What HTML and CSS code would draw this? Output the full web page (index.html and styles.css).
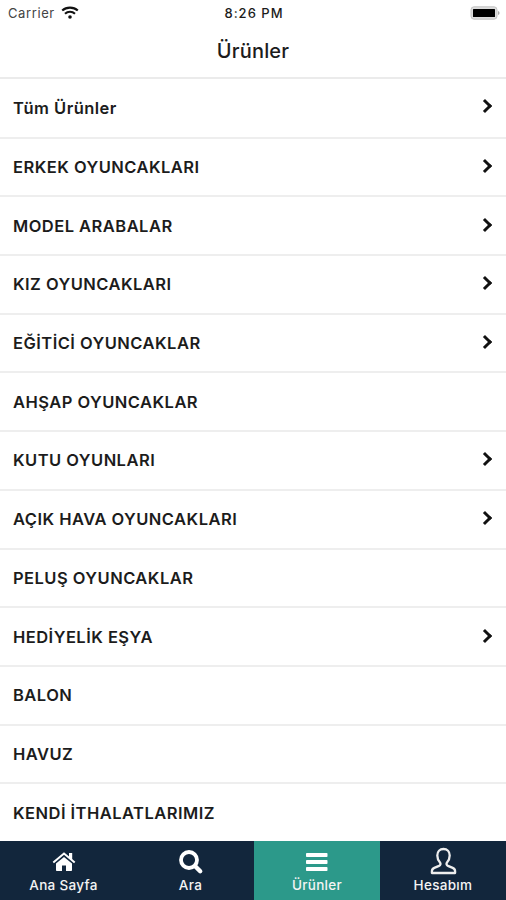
FILE: index.html
```html
<!DOCTYPE html>
<html lang="tr">
<head>
    <meta charset="UTF-8">
    <meta name="viewport" content="width=device-width, initial-scale=1.0">
    <title>Ürünler</title>
    <link rel="stylesheet" href="styles.css">
</head>
<body>
    <div class="status-bar">
        <div class="carrier">
            <span>Carrier</span>
            <svg class="wifi" viewBox="0 0 18 13">
                <path d="M1.2 4.6C5.5 0.6 12.5 0.6 16.8 4.6M4 7.7C6.8 5.1 11.2 5.1 14 7.7" fill="none" stroke="#111" stroke-width="2.1"/>
                <circle cx="9" cy="11" r="1.8" fill="#111"/>
            </svg>
        </div>
        <span class="time">8:26 PM</span>
        <div class="status-right">
            <svg class="battery" viewBox="0 0 30 14">
                <rect x="1" y="0.8" width="26" height="12.4" rx="3" fill="#ddd" stroke="#c4c4c4"/>
                <rect x="3" y="3" width="22" height="8" rx="0.5" fill="#000"/>
                <path d="M28 5v4q1.6-.6 1.6-2T28 5z" fill="#aaa"/>
            </svg>
        </div>
    </div>

    <h1 class="header">Ürünler</h1>

    <ul class="category-list">
        <li><a href="#" class="has-children first">Tüm Ürünler</a></li>
        <li><a href="#" class="has-children">ERKEK OYUNCAKLARI</a></li>
        <li><a href="#" class="has-children">MODEL ARABALAR</a></li>
        <li><a href="#" class="has-children">KIZ OYUNCAKLARI</a></li>
        <li><a href="#" class="has-children">EĞİTİCİ OYUNCAKLAR</a></li>
        <li><a href="#">AHŞAP OYUNCAKLAR</a></li>
        <li><a href="#" class="has-children">KUTU OYUNLARI</a></li>
        <li><a href="#" class="has-children">AÇIK HAVA OYUNCAKLARI</a></li>
        <li><a href="#">PELUŞ OYUNCAKLAR</a></li>
        <li><a href="#" class="has-children">HEDİYELİK EŞYA</a></li>
        <li><a href="#">BALON</a></li>
        <li><a href="#">HAVUZ</a></li>
        <li><a href="#">KENDİ İTHALATLARIMIZ</a></li>
    </ul>

    <nav class="tab-bar">
        <a href="#" class="tab">
            <svg viewBox="0 0 26 26">
                <path d="M13 8L5 14.6V21.2q0 .8.8.8H11v-5.5h4V22h5.2q.8 0 .8-.8V14.6z" fill="#fff"/>
                <path d="M2.3 13.4L13 4.6L23.7 13.4" fill="none" stroke="#fff" stroke-width="2"/>
                <path d="M18 4h3.200v7L18 8.400z" fill="#fff"/>
            </svg>
            <span>Ana Sayfa</span>
        </a>
        <a href="#" class="tab">
            <svg viewBox="0 0 26 26">
                <circle cx="11" cy="11" r="8" fill="none" stroke="#fff" stroke-width="3.8"/>
                <path d="M17.2 17.2L22.2 22.2" stroke="#fff" stroke-width="4.4" stroke-linecap="round"/>
            </svg>
            <span>Ara</span>
        </a>
        <a href="#" class="tab active">
            <svg viewBox="0 0 26 26">
                <rect x="2" y="4" width="21.5" height="4" rx="0.8" fill="#fff"/>
                <rect x="2" y="11" width="21.5" height="4" rx="0.8" fill="#fff"/>
                <rect x="2" y="18" width="21.5" height="4" rx="0.8" fill="#fff"/>
            </svg>
            <span>Ürünler</span>
        </a>
        <a href="#" class="tab">
            <svg viewBox="0 0 26 26">
                <path d="M13.500 0C9.800 0 7.300 2.600 7.300 6.500C7.300 9.500 8.500 11.800 10 13.500C11 14.900 10.500 16.200 9 16.900L4.300 18.900C2.500 19.700 1.900 20.800 1.900 22.200V24H25.100V22.200C25.100 20.800 24.500 19.700 22.700 18.900L18 16.900C16.500 16.200 16 14.900 17 13.500C18.500 11.800 19.700 9.500 19.700 6.500C19.700 2.600 17.200 0 13.500 0Z" fill="none" stroke="#eee" stroke-width="2.3" stroke-linejoin="round"/>
            </svg>
            <span>Hesabım</span>
        </a>
    </nav>
</body>
</html>
```
FILE: styles.css
```css
* {
    box-sizing: border-box;
}

body {
    margin: 0;
    height: 900px;
    display: flex;
    flex-direction: column;
    overflow: hidden;
    background-color: #fff;
    color: #1c1c1c;
    font-family: Inter, "Liberation Sans", sans-serif;
}

.status-bar {
    height: 26px;
    padding: 0 6px 0 8px;
    display: grid;
    grid-template-columns: 1fr auto 1fr;
    align-items: center;
    font-size: 13px;
}

.carrier {
    display: flex;
    align-items: center;
    gap: 6px;
    color: #444;
    letter-spacing: 0.6px;
}

.wifi {
    width: 18px;
    height: 13px;
    margin-top: -2px;
}

.time {
    font-weight: 500;
    letter-spacing: 1px;
}

.status-right {
    display: flex;
    justify-content: flex-end;
}

.battery {
    width: 30px;
    height: 14px;
}

.header {
    height: 53px;
    margin: 0;
    border-bottom: 2px solid #ebebeb;
    font-size: 20px;
    font-weight: 500;
    letter-spacing: 0.2px;
    line-height: 51px;
    text-align: center;
}

.category-list {
    flex: 1;
    margin: 0;
    padding: 1px 0 0;
    overflow: hidden;
    list-style: none;
}

.category-list li {
    height: 58.7px;
    border-bottom: 2px solid #eee;
}

.category-list li:last-child {
    border-bottom-color: transparent;
}

.category-list a {
    height: 100%;
    padding: 0 13px;
    display: flex;
    align-items: center;
    justify-content: space-between;
    color: #1c1c1c;
    font-size: 16.5px;
    font-weight: 600;
    letter-spacing: 0.47px;
    text-decoration: none;
}

/* chevron */
.has-children::after {
    content: "";
    width: 7px;
    height: 7px;
    margin: -2px 3px 0 0;
    border-top: 3.5px solid #111;
    border-right: 3.5px solid #111;
    transform: rotate(45deg);
}

.first::after {
    margin-top: -4px;
}

.tab-bar {
    height: 59px;
    display: grid;
    grid-template-columns: 127px 127px 126px 126px;
    background-color: #12263c;
}

.tab {
    padding-top: 8px;
    display: flex;
    flex-direction: column;
    align-items: center;
    color: #f4f4f4;
    font-size: 13.5px;
    font-weight: 500;
    letter-spacing: 0.3px;
    line-height: 21px;
    text-decoration: none;
}

.tab svg {
    width: 26px;
    height: 26px;
    overflow: visible;
}

.tab.active {
    background-color: #2c998a;
}
```
